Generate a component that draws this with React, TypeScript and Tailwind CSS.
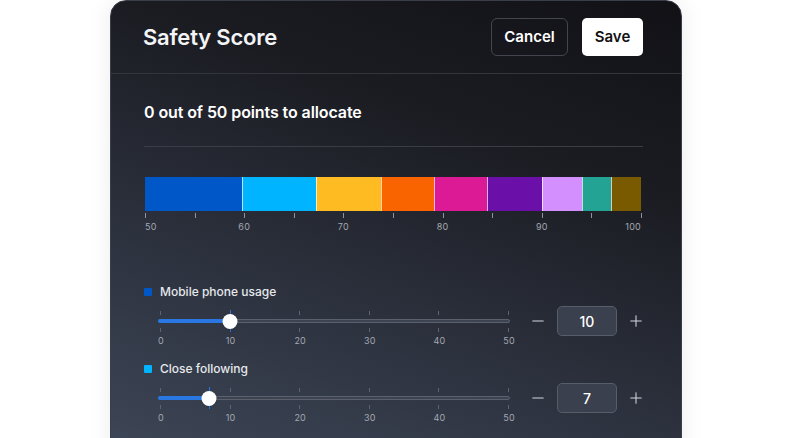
import React from 'react';
import { Minus, Plus } from 'lucide-react';

const segments = [
  { color: '#0057c8', size: 99 },
  { color: '#00b4ff', size: 74 },
  { color: '#ffbb22', size: 65 },
  { color: '#f96400', size: 53 },
  { color: '#dc1a96', size: 53 },
  { color: '#6a0fa8', size: 54 },
  { color: '#d48fff', size: 40 },
  { color: '#23a393', size: 29 },
  { color: '#7a5a00', size: 29 },
];

const factors = [
  { label: 'Mobile phone usage', color: '#0057c8', value: 10 },
  { label: 'Close following', color: '#00b4ff', value: 7 },
];

const ScoreScale = () => {
  const ticks = [...Array(11)].map((_, i) => i);
  return (
    <div className="relative h-[24px] w-full">
      {ticks.map((i) => (
        <div
          key={i}
          className="absolute top-[2px] h-[5px] w-px bg-[#8d929c]"
          style={{ left: `${i * 10}%` }}
        />
      ))}
      {[0, 2, 4, 6, 8, 10].map((i) => (
        <span
          key={i}
          className={
            'absolute top-[10px] text-[9px] leading-[11px] tracking-wide text-[#a3a7b0] ' +
            (i === 0 ? '' : i === 10 ? '-translate-x-full' : '-translate-x-1/2')
          }
          style={{ left: `${i * 10}%` }}
        >
          {50 + i * 5}
        </span>
      ))}
    </div>
  );
};

const Slider = ({ value, max = 50 }: { value: number; max?: number }) => {
  const pos = (v: number) => 2 + (v / max) * 348;
  return (
    <div className="relative h-[42px] w-[352px]">
      {[0, 10, 20, 30, 40, 50].map((v) => (
        <React.Fragment key={v}>
          <div className="absolute top-[5px] h-[4px] w-px bg-[#5d6370]" style={{ left: pos(v) }} />
          <div className="absolute top-[22px] h-[4px] w-px bg-[#5d6370]" style={{ left: pos(v) }} />
          <span
            className="absolute top-[29px] -translate-x-1/2 text-[9px] leading-[11px] tracking-wide text-[#a3a7b0]"
            style={{ left: pos(v) + 1 }}
          >
            {v}
          </span>
        </React.Fragment>
      ))}
      <div className="absolute left-0 right-0 top-[13px] h-[4px] rounded-full border border-[#5a606c] bg-[#3d4350]" />
      <div
        className="absolute left-0 top-[13px] h-[4px] rounded-full bg-[#2877e3]"
        style={{ width: pos(value) }}
      />
      <div className="absolute top-[4px] h-[22px] w-px bg-[#2877e3]" style={{ left: pos(value) }} />
      <div
        className="absolute top-[8px] h-[15px] w-[15px] -translate-x-1/2 rounded-full bg-white shadow"
        style={{ left: pos(value) + 0.5 }}
      />
    </div>
  );
};

const FactorRow = ({ label, color, value }: { label: string; color: string; value: number }) => (
  <div className="mb-[13px]">
    <div className="flex h-4 items-center gap-[8px]">
      <span className="h-[8px] w-[8px] rounded-[1px]" style={{ backgroundColor: color }} />
      <span className="text-[12px] font-medium text-[#e6e8ec]">{label}</span>
    </div>
    <div className="mt-[6px] flex items-start">
      <div className="ml-[14px]">
        <Slider value={value} />
      </div>
      <div className="ml-auto flex h-[30px] items-center">
        <Minus size={18} strokeWidth={1.4} className="text-[#d4d7dd]" />
        <div className="ml-[10px] mr-[10px] flex h-[30px] w-[60px] items-center justify-center rounded-[5px] border border-[#565d6b] bg-[#3a404d] text-[14px] font-medium text-white">
          {value}
        </div>
        <Plus size={18} strokeWidth={1.4} className="-mr-[2px] text-[#d4d7dd]" />
      </div>
    </div>
  </div>
);

export default function App() {
  return (
    <div className="h-[438px] w-[792px] overflow-hidden bg-white font-['Inter',sans-serif]">
      <div className="ml-[110px] h-[470px] w-[572px] rounded-t-[16px] border border-[#3a3e48] bg-[linear-gradient(200deg,#111116_0%,#1b1c22_30%,#2b303c_62%,#3f4859_100%)] shadow-[0_0_24px_rgba(0,0,0,0.08)]">
        <div className="flex h-[73px] items-center justify-between border-b border-[#33353d] pl-[32px] pr-[38px]">
          <h1 className="text-[22px] font-semibold tracking-[-0.2px] text-[#f3f4f6]">Safety Score</h1>
          <div className="flex items-center gap-[14px]">
            <button className="h-[38px] w-[77px] rounded-[6px] border border-[#42454d] text-[15px] font-semibold text-white">
              Cancel
            </button>
            <button className="h-[38px] w-[61px] rounded-[5px] bg-white text-[15px] font-semibold text-[#111]">
              Save
            </button>
          </div>
        </div>
        <div className="pl-[33px] pr-[38px]">
          <p className="mt-[26px] text-[16px] font-semibold leading-[24px] tracking-[-0.1px] text-white">
            0 out of 50 points to allocate
          </p>
          <div className="mt-[22px] h-px bg-[#3a3d46]" />
          <div className="mt-[30px] flex h-[34px] w-[497px] pl-px">
            {segments.map((s, i) => (
              <div
                key={i}
                className={i === 0 ? '' : 'border-l border-white/70'}
                style={{ backgroundColor: s.color, flexGrow: s.size, flexBasis: 0 }}
              />
            ))}
          </div>
          <div className="w-[497px] pl-px">
            <ScoreScale />
          </div>
          <div className="mt-[49px]">
            {factors.map((f) => (
              <FactorRow key={f.label} {...f} />
            ))}
          </div>
        </div>
      </div>
    </div>
  );
}
